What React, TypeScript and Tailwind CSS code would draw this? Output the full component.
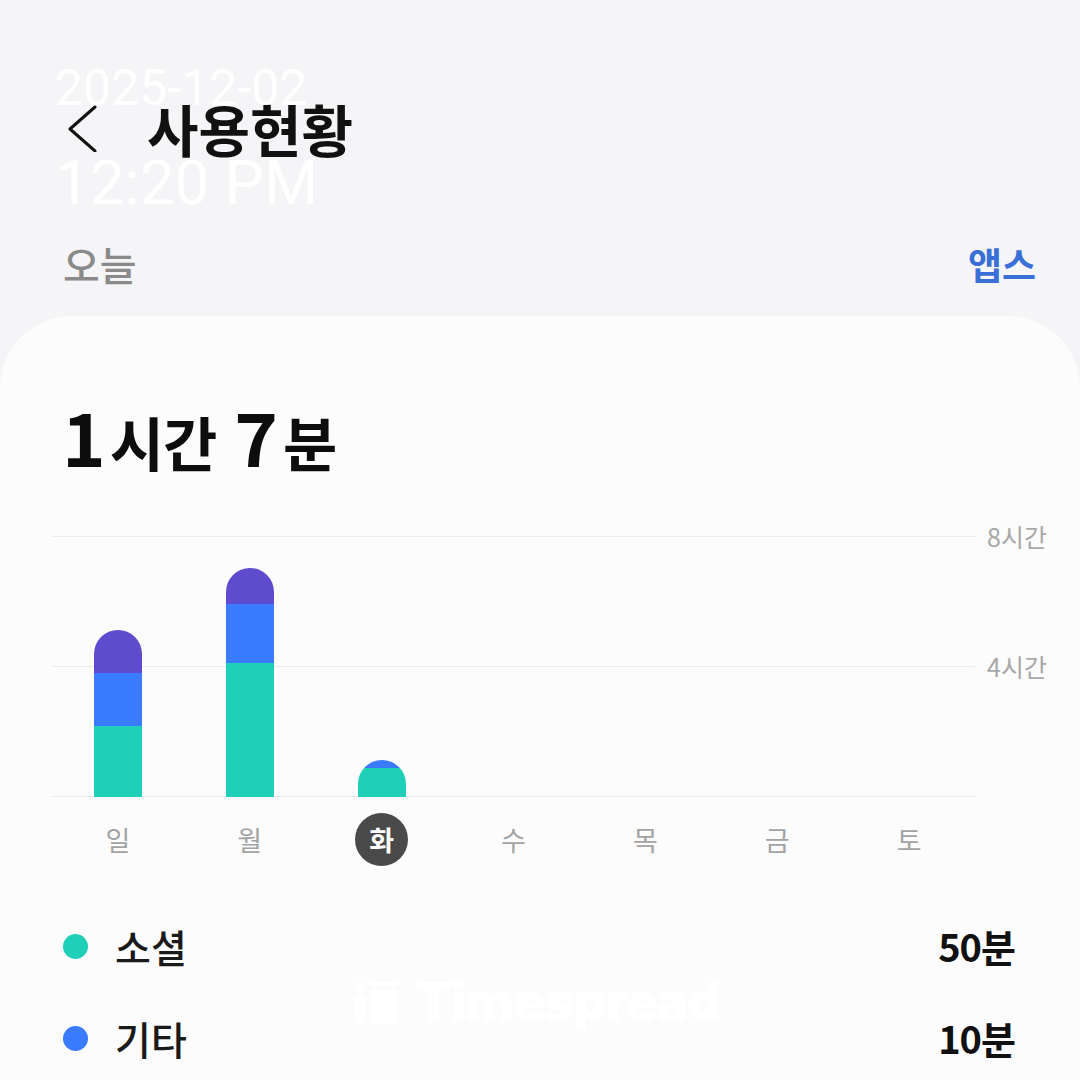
import React from "react";

const KR = { fontFamily: '"Noto Sans CJK KR", "Noto Sans", sans-serif' };

type Bar = { green: number; blue: number; purple: number };
const bars: (Bar | null)[] = [
  { green: 71, blue: 53, purple: 43 },
  { green: 134, blue: 59, purple: 36 },
  { green: 29, blue: 8, purple: 0 },
  null,
  null,
  null,
  null,
];
const days = ["일", "월", "화", "수", "목", "금", "토"];

export default function App() {
  return (
    <div
      className="relative w-[1080px] h-[1080px] overflow-hidden bg-[#f5f5f7] flex flex-col"
      style={KR}
    >
      {/* Header */}
      <div className="flex items-center h-[56px] mt-[100px] pl-[68px]">
        <svg width="30" height="48" viewBox="0 0 30 48" className="shrink-0">
          <polyline
            points="27,3 2,25 27,47"
            fill="none"
            stroke="#111"
            strokeWidth="3"
            strokeLinecap="round"
            strokeLinejoin="round"
          />
        </svg>
        <div className="ml-[49px] text-[56px] leading-none font-bold text-[#111]">
          사용현황
        </div>
      </div>

      {/* Sub header */}
      <div className="flex items-center justify-between h-[40px] mt-[88px] pl-[63px] pr-[44px]">
        <span className="text-[40px] leading-none font-medium text-[#8a8a8a]">오늘</span>
        <span className="text-[37px] leading-none font-semibold text-[#3a6fd6]">앱스</span>
      </div>

      {/* Card */}
      <div className="flex-1 mt-[32px] bg-[#fcfcfc] rounded-t-[72px] flex flex-col pt-[82px]">
        <div className="flex items-baseline pl-[62px] font-bold text-[#0d0d0d] leading-none">
          <span className="text-[74px] leading-none">1</span>
          <span className="text-[59px] leading-none ml-[4px] tracking-[-1px]">시간</span>
          <span className="text-[74px] leading-none ml-[18px]">7</span>
          <span className="text-[59px] leading-none ml-[5px]">분</span>
        </div>

        {/* Chart */}
        <div className="flex mt-[64px] pl-[52px]">
          <div className="w-[923px]">
            <div className="grid h-[261px]">
              <div className="[grid-area:1/1] flex flex-col justify-between">
                <div className="h-px bg-[#ebebeb]" />
                <div className="h-px bg-[#ebebeb]" />
                <div className="h-px bg-[#ebebeb]" />
              </div>
              <div className="[grid-area:1/1] grid grid-cols-7 items-end">
                {bars.map((b, i) => (
                  <div key={i} className="flex justify-center">
                    {b && (
                      <div className="w-[48px] rounded-t-[24px] overflow-hidden flex flex-col">
                        {b.purple > 0 && (
                          <div className="bg-[#5f4bce]" style={{ height: b.purple }} />
                        )}
                        <div className="bg-[#3a7bff]" style={{ height: b.blue }} />
                        <div className="bg-[#1fcfb7]" style={{ height: b.green }} />
                      </div>
                    )}
                  </div>
                ))}
              </div>
            </div>
            <div className="grid grid-cols-7 mt-[16px]">
              {days.map((d, i) => (
                <div key={d} className="h-[53px] flex items-center justify-center">
                  {i === 2 ? (
                    <div className="w-[53px] h-[53px] rounded-full bg-[#4a4a4a] flex items-center justify-center text-white text-[27px] font-semibold leading-none">
                      {d}
                    </div>
                  ) : (
                    <span className="text-[27px] leading-none text-[#a3a3a3]">{d}</span>
                  )}
                </div>
              ))}
            </div>
          </div>
          <div className="h-[261px] flex flex-col justify-between ml-[12px]">
            <div className="h-px flex items-center">
              <span className="text-[25px] leading-none text-[#a8a8a8] whitespace-nowrap">8시간</span>
            </div>
            <div className="h-px flex items-center">
              <span className="text-[25px] leading-none text-[#a8a8a8] whitespace-nowrap">4시간</span>
            </div>
            <div className="h-px" />
          </div>
        </div>

        {/* Legend */}
        <div className="flex flex-col gap-[32px] mt-[50px] pl-[63px] pr-[65px]">
          <div className="flex items-center h-[60px]">
            <div className="w-[25px] h-[25px] rounded-full bg-[#1fcfb7]" />
            <span className="ml-[27px] text-[39px] leading-none font-medium text-[#1a1a1a]">소셜</span>
            <span className="ml-auto text-[38px] leading-none font-bold text-[#111] tracking-[-1px]">50분</span>
          </div>
          <div className="flex items-center h-[60px]">
            <div className="w-[25px] h-[25px] rounded-full bg-[#3a7bff]" />
            <span className="ml-[27px] text-[39px] leading-none font-medium text-[#1a1a1a]">기타</span>
            <span className="ml-auto text-[38px] leading-none font-bold text-[#111] tracking-[-1px]">10분</span>
          </div>
        </div>
      </div>

      {/* Timestamp overlay */}
      <div
        className="absolute left-[55px] top-[63px] flex flex-col text-white/95 leading-none"
        style={{ fontFamily: 'Roboto, "Liberation Sans", sans-serif' }}
      >
        <span className="text-[50px] leading-none">2025-12-02</span>
        <span className="text-[62px] leading-none mt-[39px]">12:20 PM</span>
      </div>

      {/* Watermark */}
      <div className="absolute left-[355px] top-[976px] flex items-center gap-[18px]">
        <svg width="43" height="41" viewBox="0 0 43 41">
          <rect x="0" y="0" width="10" height="9" rx="3" fill="#ffffff" />
          <rect x="0" y="13" width="10" height="28" fill="#ffffff" />
          <rect x="15" y="0" width="28" height="4" fill="#ffffff" />
          <rect x="15" y="7" width="28" height="34" fill="#ffffff" />
        </svg>
        <span
          className="text-[52px] leading-none font-black text-white tracking-[-1px]"
          style={{ fontFamily: 'Inter, "Liberation Sans", sans-serif' }}
        >
          Timespread
        </span>
      </div>
    </div>
  );
}
